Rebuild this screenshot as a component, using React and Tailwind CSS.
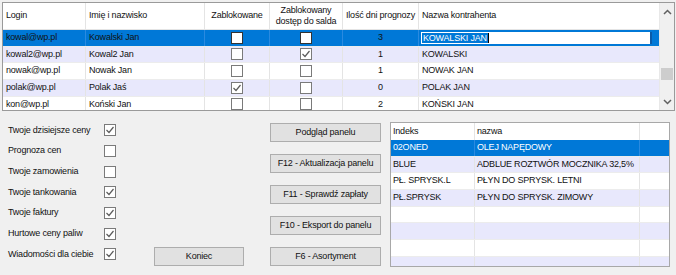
import React from "react";

const users = [
  { login: "kowal@wp.pl", name: "Kowalski Jan", blocked: false, noSaldo: false, days: 3, firm: "KOWALSKI JAN" },
  { login: "kowal2@wp.pl", name: "Kowal2 Jan", blocked: false, noSaldo: true, days: 1, firm: "KOWALSKI" },
  { login: "nowak@wp.pl", name: "Nowak Jan", blocked: false, noSaldo: false, days: 1, firm: "NOWAK JAN" },
  { login: "polak@wp.pl", name: "Polak Jaś", blocked: true, noSaldo: false, days: 0, firm: "POLAK JAN" },
  { login: "kon@wp.pl", name: "Koński Jan", blocked: false, noSaldo: false, days: 2, firm: "KOŃSKI JAN" },
];

const products = [
  { idx: "02ONED", name: "OLEJ NAPĘDOWY" },
  { idx: "BLUE", name: "ADBLUE ROZTWÓR MOCZNIKA  32,5%" },
  { idx: "PŁ. SPRYSK.L", name: "PŁYN DO SPRYSK. LETNI" },
  { idx: "PŁ.SPRYSK", name: "PŁYN DO SPRYSK. ZIMOWY" },
  {}, {}, {}, {},
];

const options = [
  ["Twoje dzisiejsze ceny", true],
  ["Prognoza cen", false],
  ["Twoje zamowienia", false],
  ["Twoje tankowania", true],
  ["Twoje faktury", true],
  ["Hurtowe ceny paliw", true],
  ["Wiadomości dla ciebie", true],
];

const buttons = [
  "Podgląd panelu",
  "F12 - Aktualizacja panelu",
  "F11 - Sprawdź zapłaty",
  "F10 - Eksport do panelu",
  "F6 - Asortyment",
];

function Check({ checked, dark }) {
  return (
    <div
      className={`w-[12px] h-[12px] bg-white border flex items-center justify-center ${
        dark ? "border-[#333333]" : "border-[#7a7a7a]"
      }`}
    >
      {checked && (
        <svg width="10" height="10" viewBox="0 0 10 10">
          <polyline points="1.5,5 4,7.5 8.5,2" fill="none" stroke="#5c5c5c" strokeWidth="1.2" />
        </svg>
      )}
    </div>
  );
}

function Chevron({ up }) {
  return (
    <svg width="9" height="6" viewBox="0 0 9 6">
      <polyline
        points={up ? "1,5 4.5,1.5 8,5" : "1,1 4.5,4.5 8,1"}
        fill="none"
        stroke="#606060"
        strokeWidth="1.5"
      />
    </svg>
  );
}

export default function App() {
  return (
    <div
      className="w-[676px] h-[275px] bg-[#f0f0f0] overflow-hidden text-[9px] tracking-[-0.2px] text-[#111]"
      style={{ fontFamily: '"Liberation Sans", Arial, sans-serif' }}
    >
      {/* users grid */}
      <div className="ml-[2px] mt-[2px] w-[673px] h-[109px] border border-[#9a9a9a] bg-[#f0f0f0] flex overflow-hidden">
        <div className="w-[656px]">
          <div className="flex h-[27px] bg-white border-b border-[#e4e4e4]">
            <div className="w-[83px] border-r border-[#e4e4e4] pl-[3px] flex items-center">Login</div>
            <div className="w-[119px] border-r border-[#e4e4e4] pl-[3px] flex items-center">Imię i nazwisko</div>
            <div className="w-[65px] border-r border-[#e4e4e4] flex items-center justify-center">Zablokowane</div>
            <div className="w-[73px] border-r border-[#e4e4e4] flex items-center justify-center text-center leading-[11px]">
              Zablokowany
              <br />
              dostęp do salda
            </div>
            <div className="w-[76px] border-r border-[#e4e4e4] flex items-center justify-center whitespace-nowrap">Ilość dni prognozy</div>
            <div className="w-[240px] pl-[3px] flex items-center">Nazwa kontrahenta</div>
          </div>
          {users.map((u, i) => {
            const sel = i === 0;
            const bg = sel ? "bg-[#0078d7]" : i % 2 === 1 ? "bg-[#e8e8fc]" : "bg-white";
            const line = sel ? "border-[#2a8ae0]" : "border-[#e4e4e4]";
            return (
              <div key={i} className={`flex h-[16.67px] ${bg} border-b border-[#ececec]`}>
                <div className={`w-[83px] border-r ${line} pl-[3px] flex items-center`}>{u.login}</div>
                <div className={`w-[119px] border-r ${line} pl-[3px] flex items-center`}>{u.name}</div>
                <div className={`w-[65px] border-r ${line} flex items-center justify-center`}>
                  <Check checked={u.blocked} dark={sel} />
                </div>
                <div className={`w-[73px] border-r ${line} flex items-center justify-center`}>
                  <Check checked={u.noSaldo} dark={sel} />
                </div>
                <div className={`w-[76px] border-r ${line} flex items-center justify-center`}>{u.days}</div>
                {sel ? (
                  <div className="w-[240px] flex items-center pl-[2px] pr-[7px]">
                    <div className="flex-1 h-[12px] bg-white border-r-2 border-[#0a5aa8] flex items-center pl-[1px]">
                      <span className="h-[10px] bg-[#0078d7] text-white leading-[10px] px-[1px]">{u.firm}</span>
                      <span className="w-px h-[10px] bg-black" />
                    </div>
                  </div>
                ) : (
                  <div className="w-[240px] pl-[3px] flex items-center">{u.firm}</div>
                )}
              </div>
            );
          })}
        </div>
        {/* scrollbar */}
        <div className="w-[15px] bg-[#f0f0f0] flex flex-col items-center border-l border-[#e8e8e8]">
          <div className="h-[17px] flex items-center justify-center">
            <Chevron up />
          </div>
          <div className="flex-1 w-full px-[1px] pt-[48px]">
            <div className="h-[12px] bg-[#cdcdcd]" />
          </div>
          <div className="h-[17px] flex items-center justify-center">
            <Chevron />
          </div>
        </div>
      </div>

      {/* bottom section */}
      <div className="flex h-[164px]">
        <div className="ml-[8px] mt-[9px] flex flex-col">
          {options.map(([label, on]) => (
            <div key={label} className="h-[20.67px] flex items-center">
              <div className="w-[96px] whitespace-nowrap">{label}</div>
              <Check checked={on} />
            </div>
          ))}
        </div>

        <div className="ml-[38px] mt-[136px]">
          <div className="w-[90px] h-[19px] bg-[#e1e1e1] border border-[#adadad] flex items-center justify-center">
            Koniec
          </div>
        </div>

        <div className="ml-[26px] mt-[12px] flex flex-col gap-[12px]">
          {buttons.map((b) => (
            <div
              key={b}
              className="w-[111px] h-[19px] bg-[#e1e1e1] border border-[#adadad] flex items-center justify-center whitespace-nowrap"
            >
              {b}
            </div>
          ))}
        </div>

        <div className="ml-[9px] mt-[11px] w-[280px] h-[145px] border border-[#a8a8a8] bg-[#f0f0f0] overflow-hidden">
          <div className="flex h-[17px] bg-white">
            <div className="w-[84px] border-r border-[#e4e4e4] pl-[2px] flex items-center">Indeks</div>
            <div className="w-[165px] border-r border-[#e4e4e4] pl-[2px] flex items-center">nazwa</div>
            <div className="flex-1" />
          </div>
          {products.map((p, i) => {
            const sel = i === 0;
            const bg = sel ? "bg-[#0078d7] text-white" : i % 2 === 1 ? "bg-[#e8e8fc]" : "bg-white";
            const line = sel ? "border-[#2a8ae0]" : "border-[#e4e4e4]";
            return (
              <div key={i} className={`flex h-[16.67px] ${bg} border-b border-[#ececec]`}>
                <div className={`w-[84px] border-r ${line} pl-[2px] flex items-center whitespace-nowrap`}>{p.idx}</div>
                <div className={`w-[165px] border-r ${line} pl-[2px] flex items-center whitespace-nowrap`}>{p.name}</div>
                <div className="flex-1" />
              </div>
            );
          })}
        </div>
      </div>
    </div>
  );
}
